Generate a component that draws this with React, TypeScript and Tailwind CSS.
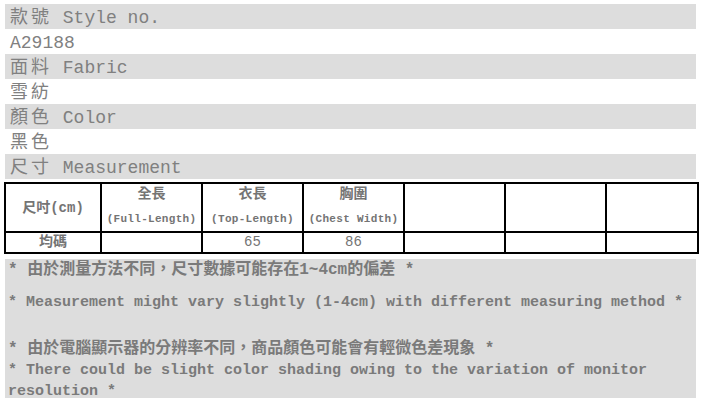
const FONT = "font-['Liberation_Mono','Noto_Sans_CJK_TC',monospace]"

type Row = { zh?: string; en?: string; gray: boolean }

const ROWS: Row[] = [
  { zh: "款號", en: "Style no.", gray: true },
  { en: "A29188", gray: false },
  { zh: "面料", en: "Fabric", gray: true },
  { zh: "雪紡", gray: false },
  { zh: "顏色", en: "Color", gray: true },
  { zh: "黑色", gray: false },
  { zh: "尺寸", en: "Measurement", gray: true },
]

const HEADERS = [
  { zh: "全長", en: "(Full-Length)" },
  { zh: "衣長", en: "(Top-Length)" },
  { zh: "胸圍", en: "(Chest Width)" },
]

const COLS = [96, 101, 101, 101, 101, 101, 92]

export default function App() {
  return (
    <div className={`w-[701px] h-[403px] bg-white overflow-hidden pt-1 ${FONT}`}>
      <div className="ml-[5px] w-[691px]">
        {ROWS.map((r, i) => (
          <div
            key={i}
            className={`h-[25px] pl-[5px] text-[18px] leading-[29px] text-[#808080] whitespace-pre ${
              r.gray ? "bg-[#dddddd]" : "bg-white"
            }`}
          >
            {r.zh && <span className="tracking-[3px]">{r.zh}</span>}
            {r.zh && r.en && <span> </span>}
            {r.en && <span>{r.en}</span>}
          </div>
        ))}
      </div>

      <table className="mt-[3px] ml-[4px] w-[693px] border-collapse table-fixed text-[#747474]">
        <colgroup>
          {COLS.map((w, i) => (
            <col key={i} style={{ width: w }} />
          ))}
        </colgroup>
        <tbody>
          <tr className="h-[49px]">
            <td className="border-2 border-black text-center align-middle text-[14px] font-bold pt-[2px]">
              尺吋(cm)
            </td>
            {HEADERS.map((h) => (
              <td key={h.en} className="border-2 border-black text-center align-top p-0">
                <div className="text-[14px] font-bold leading-[18px] mt-[1px]">{h.zh}</div>
                <div className="text-[11px] font-bold leading-[14px] mt-[9px] whitespace-nowrap tracking-[0.3px]">{h.en}</div>
              </td>
            ))}
            <td className="border-2 border-black" />
            <td className="border-2 border-black" />
            <td className="border-2 border-black" />
          </tr>
          <tr className="h-[21px]">
            <td className="border-2 border-black text-center text-[14px] font-bold leading-[17px] p-0">均碼</td>
            <td className="border-2 border-black" />
            <td className="border-2 border-black text-center text-[14px] leading-[17px] p-0">65</td>
            <td className="border-2 border-black text-center text-[14px] leading-[17px] p-0">86</td>
            <td className="border-2 border-black" />
            <td className="border-2 border-black" />
            <td className="border-2 border-black" />
          </tr>
        </tbody>
      </table>

      <div className="mt-[5px] ml-[5px] w-[691px] h-[139px] bg-[#dddddd] pl-[3px] pt-[1px] text-[15px] leading-[21px] font-bold text-[#7a7a7a] whitespace-pre">
        <div className="text-[16px]">* 由於測量方法不同，尺寸數據可能存在1~4cm的偏差 *</div>
        <div className="mt-[11px]">* Measurement might vary slightly (1-4cm) with different measuring method *</div>
        <div className="mt-[26px] text-[16px]">* 由於電腦顯示器的分辨率不同，商品顏色可能會有輕微色差現象 *</div>
        <div>* There could be slight color shading owing to the variation of monitor</div>
        <div>resolution *</div>
      </div>
    </div>
  )
}
